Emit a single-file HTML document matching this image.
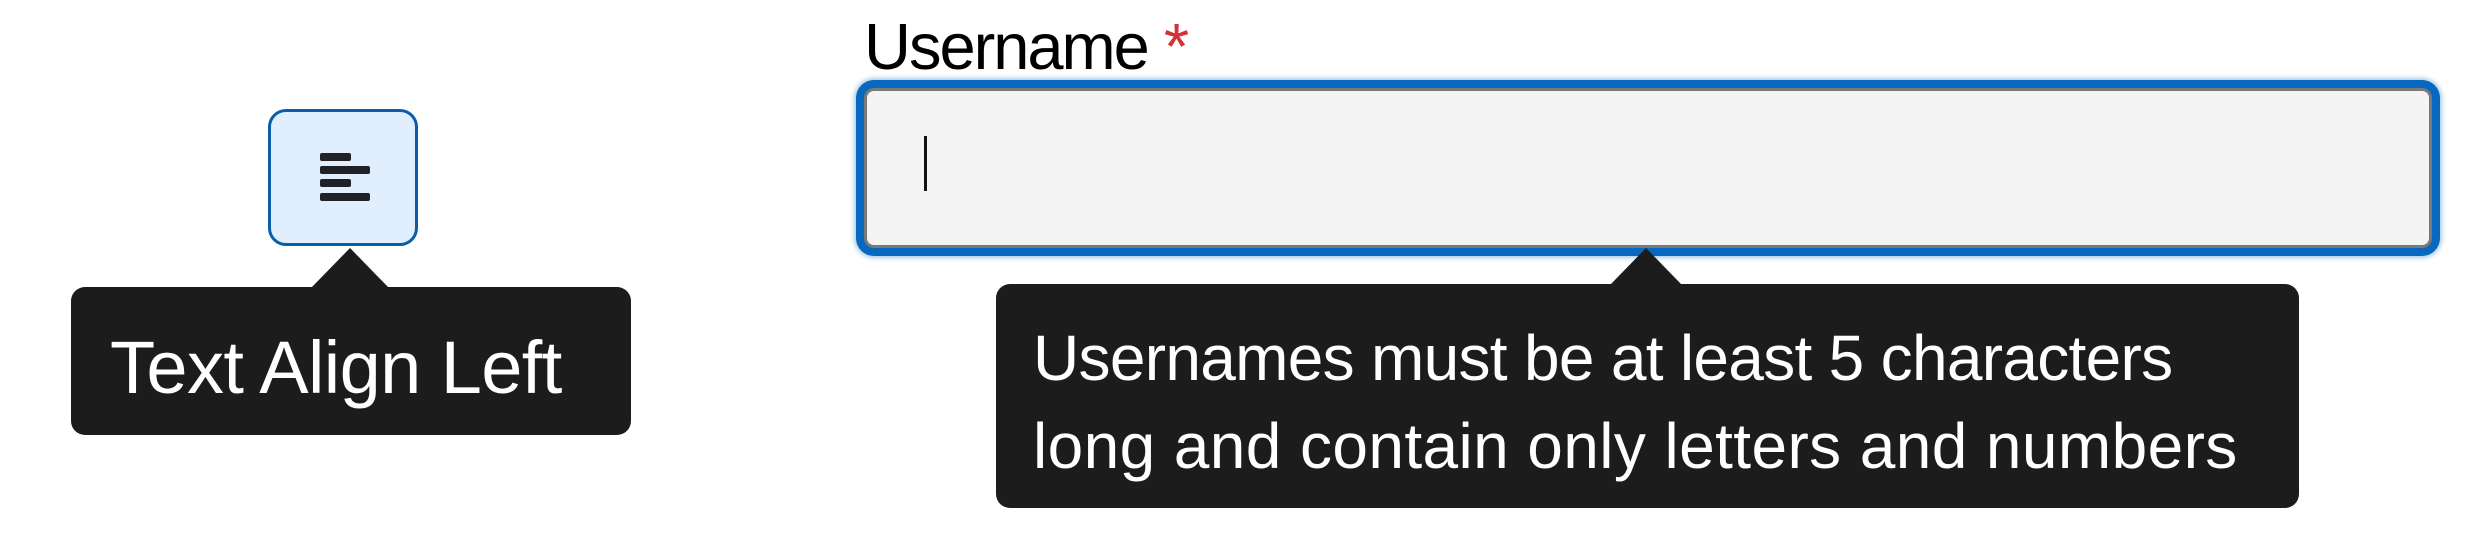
<!DOCTYPE html>
<html><head><meta charset="utf-8"><style>
body{margin:0;width:2472px;height:550px;background:#fff;position:relative;overflow:hidden;font-family:"Liberation Sans",sans-serif}
.abs{position:absolute}
.btn{left:268px;top:109px;width:144px;height:131px;border:3px solid #0a5ea8;border-radius:18px;background:#e1eefd}
.bar{position:absolute;left:320px;height:8px;background:#202126;border-radius:2px}
.tip{background:#1c1c1c;border-radius:14px;color:#fff}
.tri{width:0;height:0;border-style:solid;border-color:transparent transparent #1c1c1c transparent}
</style></head><body>
<div class="abs btn"></div>
<div class="bar" style="top:153px;width:31px"></div>
<div class="bar" style="top:166px;width:50px"></div>
<div class="bar" style="top:179px;width:31px"></div>
<div class="bar" style="top:193px;width:50px"></div>
<div class="abs tri" style="left:311px;top:248px;border-width:0 39px 40px 39px"></div>
<div class="abs tip" style="left:71px;top:287px;width:560px;height:148px"></div>
<div class="abs" style="left:110px;top:323px;font-size:74px;letter-spacing:-0.6px;color:#fff;white-space:nowrap;line-height:90px">Text Align Left</div>

<div class="abs" style="left:864px;top:7px;font-size:65px;letter-spacing:-2px;line-height:80px;white-space:nowrap">Username <span style="color:#d13438">*</span></div>
<div class="abs" style="left:864px;top:88px;width:1562px;height:154px;border:3px solid #7a7a7a;border-radius:10px;background:#f4f4f4;box-shadow:0 0 0 8px #0867bf,0 0 4px 10px rgba(0,103,192,.35)"></div>
<div class="abs" style="left:924px;top:136px;width:3px;height:55px;background:#111"></div>
<div class="abs tri" style="left:1611px;top:248px;border-width:0 35px 36px 35px"></div>
<div class="abs tip" style="left:996px;top:284px;width:1303px;height:224px"></div>
<div class="abs" style="left:1033px;top:314px;font-size:64px;line-height:88px;color:#fff;white-space:nowrap"><div style="letter-spacing:-0.7px">Usernames must be at least 5 characters</div><div style="letter-spacing:0.4px">long and contain only letters and numbers</div></div>
</body></html>
